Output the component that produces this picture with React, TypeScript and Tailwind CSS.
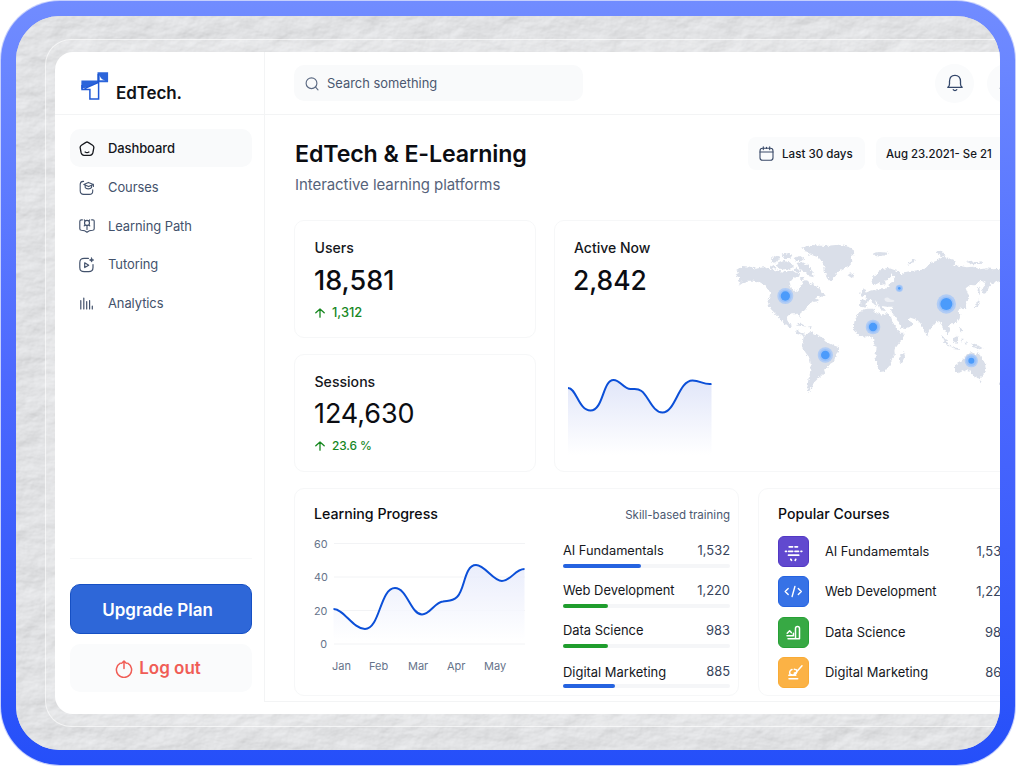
import React from "react";

const line = {
  fill: "none",
  stroke: "currentColor",
  strokeLinecap: "round" as const,
  strokeLinejoin: "round" as const,
};

function Wall() {
  return (
    <svg className="absolute inset-0 h-full w-full" aria-hidden="true">
      <defs>
        <filter id="plaster" x="0" y="0" width="100%" height="100%" colorInterpolationFilters="sRGB">
          <feTurbulence type="fractalNoise" baseFrequency="0.03 0.045" numOctaves="5" seed="21" result="n" />
          <feDiffuseLighting in="n" surfaceScale="0.95" diffuseConstant="1.1" lightingColor="#dfe0e2">
            <feDistantLight azimuth="235" elevation="66" />
          </feDiffuseLighting>
        </filter>
      </defs>
      <rect width="100%" height="100%" filter="url(#plaster)" />
    </svg>
  );
}

function Logo() {
  return (
    <svg className="h-[28px] w-[28px]" viewBox="0 0 28 28">
      <path d="M16.5 0.3h10.6v9.9H16.5z" fill="#2b64da" />
      <path d="M18.7 3.2c.5 2.6 2 4.6 5.5 5h-5.5z" fill="#fff" />
      <path d="M0.4 8.4H17.5V10L8 14.5 0.4 17z" fill="#2b64da" />
      <path d="M2 17.3 17 10.8v16H8.900v-9.500z" fill="#fff" />
      <path d="M1 13v4.500h7.900v9.500h8.700V10.200L3.500 16.600" fill="none" stroke="#2059d6" strokeWidth="1.5" />
      <path d="M17.200 2v9" stroke="#1c54cf" strokeWidth="1.3" />
    </svg>
  );
}

function HomeIcon() {
  return (
    <svg className="size-4" viewBox="0 0 16 16" strokeWidth="1.3" {...line}>
      <path d="M6.900 1.400 2.400 4.300C1.400 5 1 5.700 1.200 6.800l.9 4.900c.4 1.900 1.200 2.600 2.900 2.600h6c1.700 0 2.500-.7 2.900-2.600l.9-4.900c.2-1.100-.2-1.800-1.200-2.500L9.100 1.400c-.7-.5-1.500-.5-2.200 0Z" />
      <path d="M6.100 11c.9.600 2.900.6 3.800 0" />
    </svg>
  );
}

function CoursesIcon() {
  return (
    <svg className="size-4" viewBox="0 0 16 16" strokeWidth="1.1" {...line}>
      <path d="M4.600 1.400H4C2 1.600 1.200 2.500 1.200 4.600v6.200c0 2.500 1 3.600 3.500 3.600h5.600c2.400 0 3.400-1 3.400-3.200V9.800" />
      <path d="m4.800 4.400 4.600-2 5 2-4.800 2.200zM14.400 4.400v2" />
      <path d="M6.200 5.400v2c1 1.900 5.200 1.900 6.400 0V5.400" />
    </svg>
  );
}

function PathIcon() {
  return (
    <svg className="size-4" viewBox="0 0 16 16" strokeWidth="1.15" {...line}>
      <path d="M3.400 1.800H2.400C1.300 1.800.8 2.300.8 3.400v7.300c0 1 .5 1.500 1.600 1.600 2.200.1 4 .5 5.600 1.900 1.600-1.400 3.400-1.800 5.600-1.900 1.100-.1 1.600-.6 1.600-1.600V3.400c0-1.100-.5-1.600-1.600-1.600h-1" />
      <circle cx="8" cy="4.900" r="2.500" />
      <path d="M8 7.600v3.800M5.900 2.600l-.6-.7M10.100 2.600l.6-.7M5.800 7.200l-.6.6M10.200 7.200l.6.600" />
    </svg>
  );
}

function TutorIcon() {
  return (
    <svg className="size-4" viewBox="0 0 16 16" strokeWidth="1.2" {...line}>
      <path d="M9.400 1.400H5.200C2 1.400.8 2.600.8 5.800v4.700C.8 13.500 2 14.700 5.200 14.700h4.500c3.100 0 4.300-1.200 4.300-4.200V7.500" />
      <path d="M5.700 5.800v4.800l4-2.400z" />
      <path d="m12.600.9.6 1.500 1.500.6-1.500.6-.6 1.500-.6-1.500-1.500-.6 1.500-.6z" strokeWidth=".8" fill="currentColor" />
    </svg>
  );
}

function BarsIcon() {
  return (
    <svg className="size-4" viewBox="0 0 16 16" strokeWidth="1.2" {...line}>
      <path d="M1.800 5.500V14M4.800 3v11M7.700 6.500V14M10.600 5.500V14M13.300 11.200V14" />
    </svg>
  );
}

const nav = [
  { label: "Dashboard", icon: <HomeIcon />, active: true },
  { label: "Courses", icon: <CoursesIcon /> },
  { label: "Learning Path", icon: <PathIcon /> },
  { label: "Tutoring", icon: <TutorIcon /> },
  { label: "Analytics", icon: <BarsIcon /> },
];

function Sidebar() {
  return (
    <aside className="flex h-[662px] w-[209px] shrink-0 flex-col">
      <div className="flex h-[63px] shrink-0 items-start gap-[7px] border-b border-[#f3f4f5] pt-5 pl-[26px]">
        <Logo />
        <span className="mt-[11px] text-[17px] leading-5 font-semibold tracking-[-0.1px] text-[#111318]">EdTech.</span>
      </div>
      <nav className="flex flex-col pt-[14px] pl-[15px]">
        {nav.map((n) => (
          <div
            key={n.label}
            className={
              n.active
                ? "flex h-[38.4px] w-[182px] items-center gap-3 rounded-[10px] bg-[#f9fafb] pt-[2px] pl-[9px] text-[13px] font-medium tracking-[-0.1px] text-[#15171c]"
                : "flex h-[38.4px] w-[182px] items-center gap-3 pt-[3px] pl-[9px] text-[12.95px] tracking-[-0.07px] text-[#43526c]"
            }
          >
            {n.icon}
            <span className="pl-px">{n.label}</span>
          </div>
        ))}
      </nav>
      <div className="mt-auto mb-[22px] ml-[15px] flex w-[182px] flex-col gap-[10px] border-t border-[#f7f8f9] pt-[25px]">
        <button className="h-[50px] rounded-[10px] border border-[#1650c4] bg-[#2e67d8] pt-[3px] pr-[7px] text-[17px] font-semibold text-white">
          Upgrade Plan
        </button>
        <button className="flex h-[48px] items-center justify-center gap-[6px] rounded-[10px] bg-[#fafbfc] pt-px pr-[6px] text-[17px] font-semibold text-[#f05d56]">
          <svg className="size-[18px]" viewBox="0 0 18 18" strokeWidth="1.5" {...line}>
            <path d="M5.300 3.200a7.600 7.600 0 1 0 7.400 0M9 8.500V1.300M6.700 3.200 9 1l2.300 2.200" />
          </svg>
          <span>Log out</span>
        </button>
      </div>
    </aside>
  );
}

function Bell() {
  return (
    <svg className="size-[18px]" viewBox="0 0 18 18" strokeWidth="1.3" {...line}>
      <path d="M1.800 13.300h14.400c-1.300-.9-1.700-1.700-1.700-3.400V7.300C14.500 3.600 12.400 1.300 9 1.300S3.500 3.600 3.500 7.300v2.600c0 1.700-.4 2.500-1.700 3.400Z" />
      <path d="M7.200 15.700c.8 1.100 2.800 1.100 3.600 0" />
    </svg>
  );
}

function TopBar() {
  return (
    <header className="flex h-[63px] items-center border-b border-[#f3f4f5] pl-[29px]">
      <div className="flex h-[36px] w-[289px] items-center gap-2 rounded-[10px] bg-[#f9fafb] pt-px pl-[11px] text-[12.9px] text-[#4b5870]">
        <svg className="size-[14px] text-[#5d6b84]" viewBox="0 0 14 14" strokeWidth="1.15" {...line}>
          <circle cx="6.500" cy="6.200" r="5.400" />
          <path d="m10.600 10.200 2.400 2.600" />
        </svg>
        Search something
      </div>
      <div className="ml-[352px] flex gap-3 text-[#34476a]">
        <div className="flex size-[39px] items-center justify-center rounded-full bg-[#fafbfc]">
          <Bell />
        </div>
        <div className="ml-px flex size-[39px] items-center justify-center rounded-full bg-[#fafbfc]">
          <svg className="size-[16px]" viewBox="0 0 16 16" strokeWidth="1.5" {...line}>
            <circle cx="9" cy="4" r="3" />
            <path d="M1.500 13.500c1-3.500 4-4.500 7-4.500s5 1 6 4.500z" />
          </svg>
        </div>
      </div>
    </header>
  );
}

function Heading() {
  return (
    <div className="flex h-[105px] pl-[30px]">
      <div className="w-[453px] pt-6">
        <h1 className="text-[23.2px] leading-[30px] font-semibold tracking-[-0.12px] text-[#0b0d12]">EdTech &amp; E-Learning</h1>
        <p className="mt-[6px] text-[15px] leading-5 tracking-[-0.06px] text-[#56637a]">Interactive learning platforms</p>
      </div>
      <div className="mt-[22px] flex h-[33px] gap-[11px] text-[11.6px] font-medium text-[#15171c]">
        <div className="flex w-[117px] items-center gap-2 rounded-lg bg-[#fafbfc] pt-px pl-[11px]">
          <svg className="-mt-px size-[15px] text-[#3a4a68]" viewBox="0 0 15 15" strokeWidth="1.1" {...line}>
            <rect x="1" y="2.300" width="13" height="12" rx="2.600" />
            <path d="M1 6h13M4.300.8v2.800M10.700.8v2.800M7.500 1.300v1.200" />
          </svg>
          <span className="pt-px">Last 30 days</span>
        </div>
        <div className="flex w-[160px] items-center rounded-lg bg-[#fafbfc] pt-[2px] pl-[10px] text-[11.4px] whitespace-nowrap">
          Aug 23.2021- Se 21
        </div>
      </div>
    </div>
  );
}

function Delta({ children }: { children: React.ReactNode }) {
  return (
    <div className="flex items-center gap-[7px] leading-4 font-medium text-[#16871f]">
      <svg className="size-[10px]" viewBox="0 0 10 10" strokeWidth="1.3" {...line}>
        <path d="M5 9.200V1.200M.8 4.800 5 1l4.200 3.800" />
      </svg>
      {children}
    </div>
  );
}

const land = [
  "M34 120 52 108 75 110 92 116 115 112 135 118 160 122 180 126 200 120 212 128 226 130 222 140 206 144 192 160 194 172 204 176 212 187 220 180 226 168 232 158 238 150 250 154 256 162 264 160 268 168 282 172 290 186 300 194 294 200 280 199 270 206 284 210 272 218 262 214 256 222 248 228 240 240 226 250 224 262 216 250 200 250 190 256 186 268 190 280 200 284 196 294 182 284 170 270 166 258 172 274 156 256 138 238 130 224 132 205 138 190 130 180 118 165 105 157 86 152 70 152 58 156 40 168 50 155 38 150 44 142 32 134 42 128Z",
  "M232 52 262 45 300 48 340 44 370 50 388 62 380 80 382 95 370 108 350 118 335 130 325 145 319 156 308 145 300 130 298 112 292 95 280 82 262 76 245 68Z",
  "M236 320 255 306 270 312 290 320 300 334 320 344 342 352 342 365 332 378 326 395 310 405 302 420 292 435 280 445 268 457 262 465 255 480 250 486 247 470 250 450 255 430 257 405 255 385 242 368 230 348 234 332Z",
  "M405 242 425 236 445 236 450 247 470 254 485 250 497 258 503 275 515 298 525 308 539 308 535 325 518 345 508 360 510 378 500 390 495 405 480 424 465 426 458 410 452 390 452 370 455 355 446 340 444 325 430 318 410 321 395 312 386 295 388 275 395 258Z",
  "M524 378 537 366 540 382 530 402 523 396Z",
  "M405 230 407 210 424 208 418 190 435 183 455 178 475 178 490 172 492 160 505 155 510 140 500 130 494 140 488 150 480 152 482 162 470 166 462 158 448 166 438 160 444 144 455 130 470 118 490 113 508 120 525 126 530 134 545 125 565 122 585 120 605 115 615 100 635 92 655 80 672 85 690 92 685 105 705 108 725 112 745 110 765 118 785 115 805 118 828 116 828 152 815 156 800 160 792 170 787 187 776 192 770 176 782 160 765 152 750 166 735 165 722 175 728 190 733 204 720 218 724 236 716 238 708 230 700 240 706 255 702 270 690 279 678 280 672 288 675 302 668 314 655 295 645 275 635 272 625 285 612 300 607 320 600 310 590 285 580 272 570 268 552 262 552 272 565 280 555 290 540 297 530 295 515 268 503 250 498 240 502 230 485 230 470 228 480 244 468 240 460 222 450 210 456 228 442 220 438 208 428 212 424 226 415 232Z",
  "M408 194 416 174 423 190 418 199Z M402 186 407 182 406 192Z",
  "M366 134 378 130 390 136 380 144Z",
  "M444 70 462 66 490 68 482 74 466 80 452 78Z",
  "M546 106 558 94 572 86 562 98Z",
  "M634 66 650 62 662 76 650 80Z M720 96 740 92 745 98 770 94 772 101 745 103Z",
  "M138 86 152 76 166 82 156 96 142 98Z M170 74 188 70 202 76 196 84 176 84Z M160 100 178 92 196 98 204 112 186 120 166 116 154 108Z M206 84 226 78 238 86 228 94 212 92Z M214 98 232 96 250 106 262 124 266 142 250 138 240 126 222 116Z M134 112 148 104 154 114 142 118Z M240 60 262 62 270 70 250 74Z M206 118 218 114 228 124 216 128Z M224 142 238 140 240 148 228 150Z",
  "M210 302 218 298 222 306 240 311 238 318 216 312Z M214 282 230 281 244 290 232 288Z M248 290 260 288 258 295Z",
  "M648 314 660 326 668 338 678 350 666 346 654 330Z M684 322 696 316 700 330 694 342 684 336Z M704 294 710 296 712 308 706 306Z M680 352 706 355 702 359 682 357Z M706 326 716 326 710 338Z M716 336 726 334 724 342Z M740 338 756 344 776 356 764 358 750 352 740 346Z",
  "M690 406 705 396 718 384 726 372 740 366 752 376 760 364 768 382 780 400 782 416 775 436 762 446 748 440 738 426 720 420 700 430 690 426Z M762 452 770 452 766 460Z M818 462 826 456 826 466Z",
  "M742 236 752 224 762 208 764 216 752 234Z M757 186 761 166 764 180 765 196Z",
];

const spots = [
  { x: 181, y: 198, r: 24, c: 14 },
  { x: 301, y: 375, r: 23, c: 13 },
  { x: 444, y: 291, r: 22, c: 12.5 },
  { x: 523, y: 175, r: 11, c: 4 },
  { x: 664, y: 222, r: 29, c: 18 },
  { x: 739, y: 392, r: 20, c: 9 },
];

function WorldMap() {
  return (
    <svg className="h-[170px] w-[291px] shrink-0" viewBox="0 0 873 510">
      <defs>
        <filter id="coast" x="-5%" y="-5%" width="110%" height="110%">
          <feTurbulence type="fractalNoise" baseFrequency="0.12" numOctaves="3" seed="4" />
          <feDisplacementMap in="SourceGraphic" scale="12" xChannelSelector="R" yChannelSelector="G" />
        </filter>
      </defs>
      <g fill="#dadfe9" filter="url(#coast)">
        {land.map((d) => (
          <path key={d} d={d} />
        ))}
      </g>
      <path d="M478 206c6-6 12-4 16 0s12 2 14 6-10 5-16 4-12 0-14-10Z" fill="#fff" opacity=".5" />
      {spots.map((s) => (
        <g key={s.x}>
          <circle cx={s.x} cy={s.y} r={s.r} fill="#a9c9f7" opacity=".85" />
          <circle cx={s.x} cy={s.y} r={s.r * 0.78} fill="#8ebcf9" opacity=".7" />
          <circle cx={s.x} cy={s.y} r={s.c} fill="#4b9bfb" />
        </g>
      ))}
    </svg>
  );
}

const activeCurve =
  "M568.500 388C577 388 579 410.500 591 410.500 604 410.500 603 380 614 380 621 380 624 389 631 389 637 389 638 388 642 391 649 396 653 412.500 663 412.500 676 412.500 679 380.500 693 380.500 701 380.500 704 385 712 384";

function Stats() {
  return (
    <div className="flex h-[252px] gap-[18px] pl-[29px]">
      <div className="flex w-[242px] shrink-0 flex-col justify-between">
        <section className="h-[118px] rounded-[10px] border border-[#f6f7f8] pt-[17px] pl-[20px]">
          <h2 className="-ml-[0.5px] text-[14.1px] leading-5 font-medium text-[#15171c]">Users</h2>
          <div className="mt-[5px] -ml-px text-[27px] leading-9 font-medium text-[#0b0d12]">18,581</div>
          <div className="mt-[6px] text-[12.9px]">
            <Delta>1,312</Delta>
          </div>
        </section>
        <section className="h-[118px] rounded-[10px] border border-[#f6f7f8] pt-[17px] pl-[20px]">
          <h2 className="-ml-[0.5px] text-[14.1px] leading-5 font-medium text-[#15171c]">Sessions</h2>
          <div className="mt-[4px] -ml-px text-[27px] leading-9 tracking-[-0.1px] text-[#0b0d12]">124,630</div>
          <div className="mt-[6px] text-[11.9px]">
            <Delta>
              <span className="-tracking-[0.1px]">23.6 %</span>
            </Delta>
          </div>
        </section>
      </div>
      <section className="flex w-[480px] shrink-0 rounded-[10px] border border-[#f6f7f8]">
        <div className="w-[170px] shrink-0 pt-[17px] pl-[13px]">
          <h2 className="pl-[6px] text-[14px] leading-5 font-medium text-[#15171c]">Active Now</h2>
          <div className="mt-[4px] pl-[5px] text-[26.4px] leading-9 font-medium text-[#0b0d12]">2,842</div>
          <svg className="mt-[75px] h-[84px] w-[145px]" viewBox="568.500 373 145 84">
            <defs>
              <linearGradient id="active" x1="0" y1="0" x2="0" y2="1">
                <stop offset="0" stopColor="#e1e6f9" />
                <stop offset="1" stopColor="#fff" />
              </linearGradient>
            </defs>
            <path d={activeCurve + "V455H568.500Z"} fill="url(#active)" />
            <path d={activeCurve} fill="none" stroke="#0b4fd8" strokeWidth="2" />
          </svg>
        </div>
        <div className="pt-[9px]">
          <WorldMap />
        </div>
      </section>
    </div>
  );
}

const skills = [
  { name: "AI Fundamentals", value: "1,532", pct: 47, color: "bg-[#2563e0]", size: "text-[12.8px]" },
  { name: "Web Development", value: "1,220", pct: 27, color: "bg-[#1f9d2d]", size: "text-[12.9px]" },
  { name: "Data Science", value: "983", pct: 27, color: "bg-[#1f9d2d]", size: "text-[12.9px]" },
  { name: "Digital Marketing", value: "885", pct: 31, color: "bg-[#2563e0]", size: "text-[12.95px]" },
];

const curve =
  "M333.500 609C344 609 353 629 365 629 380 629 380 588 395 588 407 588 411 614.500 422 614.500 430 614.500 435 602 443 601.500 449 600.500 452 601.500 457 597 465 590 464 565 476 565 485 565 493 581 502 581 511 581 515 569 524.500 569";

function Progress() {
  return (
    <section className="flex h-[208px] w-[445px] shrink-0 rounded-[10px] border border-[#f6f7f8]">
      <div className="w-[268px] shrink-0 pt-[15px] pl-[19px]">
        <h2 className="text-[14.2px] leading-5 font-medium text-[#0b0d12]">Learning Progress</h2>
        <div className="mt-[14px] flex">
          <div className="-mt-px flex w-[13px] flex-col gap-[17.4px] text-right text-[10.8px] leading-4 text-[#66738a]">
            <span>60</span>
            <span>40</span>
            <span>20</span>
            <span>0</span>
          </div>
          <svg className="ml-[5px] h-[117px] w-[194px]" viewBox="332 538 194 117">
            <defs>
              <linearGradient id="learn" x1="0" y1="0" x2="0" y2="1">
                <stop offset="0" stopColor="#e6eafb" />
                <stop offset="1" stopColor="#fff" />
              </linearGradient>
            </defs>
            <path d="M334 543.500H525M334 577H525M334 610.500H525M334 644H525" stroke="#f2f3f5" strokeWidth="1" />
            <path d={curve + "V641H333.500Z"} fill="url(#learn)" opacity=".85" />
            <path d={curve} fill="none" stroke="#0b4fd8" strokeWidth="2" />
          </svg>
        </div>
        <div className="mt-[3px] flex pl-[18px] text-[11px] leading-4 text-[#66738a]">
          <span className="w-[37px]">Jan</span>
          <span className="w-[39px]">Feb</span>
          <span className="w-[39px]">Mar</span>
          <span className="w-[37px]">Apr</span>
          <span>May</span>
        </div>
      </div>
      <div className="w-[167px] pt-[17px]">
        <div className="text-right text-[11.5px] leading-[18px] text-[#4b5870]">Skill-based training</div>
        <ul className="mt-[17px] flex flex-col">
          {skills.map((s) => (
            <li key={s.name} className="h-[40.2px]">
              <div className="flex items-center justify-between leading-5">
                <span className={`${s.size} text-[#15171c]`}>{s.name}</span>
                <span className="text-[12.9px] text-[#37445c]">{s.value}</span>
              </div>
              <div className="mt-[2.5px] h-1 rounded-full bg-[#f5f6f8]">
                <div className={`h-1 rounded-full ${s.color}`} style={{ width: `${s.pct}%` }} />
              </div>
            </li>
          ))}
        </ul>
      </div>
    </section>
  );
}

const courses = [
  {
    name: "AI Fundamemtals",
    value: "1,532",
    tile: "bg-[#6149cf] border-[#5238c4]",
    size: "text-[12.8px]",
    icon: (
      <path d="M11.200 10.800h3.400M17 10.800h2.500M7.500 15.300h1M10.700 15.300h4M17 15.300h3.500M23 15.300h.8M10.500 19.200h10.200M12.800 23.300l.7 1M17.700 23.300l-.5 1" />
    ),
  },
  {
    name: "Web Development",
    value: "1,220",
    tile: "bg-[#3772e6] border-[#2563e0]",
    size: "text-[12.9px]",
    icon: <path d="m10.200 12.500-3 3 3 3M20.300 12.500l3 3-3 3M16.900 10.500l-2.800 10" strokeWidth="1.4" />,
  },
  {
    name: "Data Science",
    value: "983",
    tile: "bg-[#37a944] border-[#27a035]",
    size: "text-[12.9px]",
    icon: <path d="M10 21.800h11.500V11.500a2 2 0 0 0-4 0v10M9 18.800h6.400v-2.500M9.200 16.300l2.400-2.500 1.700 1.800" strokeWidth="1.5" />,
  },
  {
    name: "Digital Marketing",
    value: "865",
    tile: "bg-[#fbb245] border-[#f9ab35]",
    size: "text-[12.95px]",
    icon: <path d="M11 21.800h8.700M14 12.500c-2.200.8-2.900 3-1.900 4.500 1.200 1.400 4.600 1.200 6-.5 1-1.300 1-2.400.4-3.600M24 8.800l-6 6.700-1.800.8M16.300 12.200l1.300.4M10.800 18.300h7" strokeWidth="1.5" />,
  },
];

function Popular() {
  return (
    <section className="h-[208px] w-[271px] shrink-0 rounded-[10px] border border-[#f6f7f8] pt-[15px] pr-[19px] pl-[19px]">
      <h2 className="text-[14.1px] leading-5 font-medium text-[#0b0d12]">Popular Courses</h2>
      <ul className="mt-[12px] flex flex-col gap-[9.4px]">
        {courses.map((c) => (
          <li key={c.name} className="flex h-[31px] items-center">
            <span className={`flex size-[31px] items-center justify-center rounded-[6px] border text-white ${c.tile}`}>
              <svg className="size-[31px] shrink-0" viewBox="0 0 31 31" strokeWidth="1.7" {...line}>
                {c.icon}
              </svg>
            </span>
            <span className={`ml-[16px] text-[#15171c] ${c.size}`}>{c.name}</span>
            <span className="ml-auto text-[12.9px] text-[#37445c]">{c.value}</span>
          </li>
        ))}
      </ul>
    </section>
  );
}

export default function App() {
  return (
    <div className="h-[766px] w-[1016px] overflow-hidden bg-white font-['Inter',sans-serif]">
      <div className="h-[766px] w-[1016px] rounded-[60px] bg-[#c5cffd] p-px">
        <div className="h-[764px] w-[1014px] rounded-[59px] bg-linear-to-b from-[#718cff] via-[#4c68fe] to-[#254ff9] p-[15px]">
          <div className="relative h-[734px] w-[984px] overflow-hidden rounded-[44px] bg-[#dddee0]">
            <Wall />
            <div className="relative mt-[23px] ml-[29px] h-[688px] w-[1100px] rounded-[26px] border border-white/60 bg-white/15 pt-[12px] pl-[9px]">
              <div className="flex h-[662px] w-[1060px] rounded-[18px] bg-white">
                <Sidebar />
                <main className="h-[650px] grow border-b border-l border-[#f3f4f5]">
                  <TopBar />
                  <Heading />
                  <Stats />
                  <div className="flex gap-[19px] pt-4 pl-[29px]">
                    <Progress />
                    <Popular />
                  </div>
                </main>
              </div>
            </div>
          </div>
        </div>
      </div>
    </div>
  );
}
